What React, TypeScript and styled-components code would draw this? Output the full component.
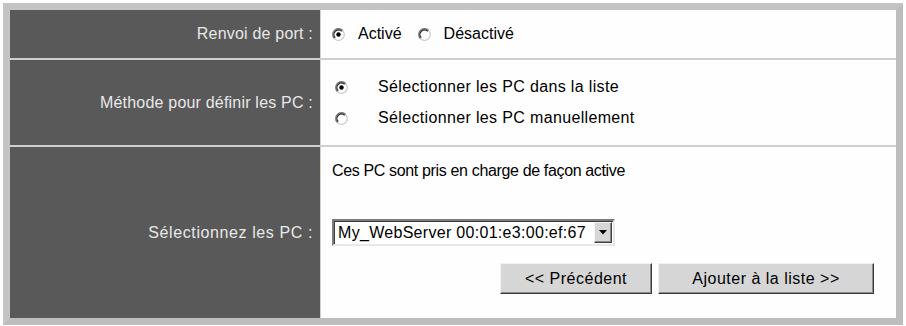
import React from "react";
import styled, { createGlobalStyle } from "styled-components";

const Global = createGlobalStyle`
  html, body { margin: 0; padding: 0; background: #ffffff; }
  body { font-family: "Liberation Sans", Arial, sans-serif; font-size: 16px; color: #000; }
`;

const Frame = styled.div`
  margin: 3px;
  width: 900px;
  box-sizing: border-box;
  border: 7px solid #bdbdbd;
  border-top-color: #c4c4c4;
  border-left-color: #c4c4c4;
  background: #cfcfcf;
  display: grid;
  grid-template-columns: 310px 1fr;
  grid-template-rows: 48px 85px 171px;
  column-gap: 1px;
  row-gap: 2px;
`;

const Label = styled.div<{ $ls?: number }>`
  background: #595959;
  color: #e8e8e8;
  display: flex;
  align-items: center;
  justify-content: flex-end;
  padding-right: 7px;
  font-size: 16px;
  letter-spacing: ${(p) => p.$ls ?? 0.2}px;
`;

const Cell = styled.div`
  background: #fefefe;
  display: flex;
  align-items: center;
  padding-left: 11px;
  gap: 16px;
`;

const Stack = styled.div`
  background: #fefefe;
  display: flex;
  flex-direction: column;
  justify-content: center;
  gap: 7px;
  padding-left: 14px;
`;

const Option = styled.label<{ $gap: number; $ls?: number }>`
  display: flex;
  align-items: center;
  gap: ${(p) => p.$gap}px;
  height: 24px;
  letter-spacing: ${(p) => p.$ls ?? 0}px;
`;

const RadioSvg = styled.svg`
  flex: none;
  display: block;
`;

const Radio = ({ checked }: { checked?: boolean }) => (
  <RadioSvg width="13" height="13" viewBox="0 0 13 13">
    <circle cx="6.5" cy="6.5" r="5.8" fill="#ffffff" stroke="#c8c8c8" strokeWidth="1.2" />
    <path d="M2.4 10.6 A5.8 5.8 0 0 1 10.6 2.4" stroke="#7a7a7a" strokeWidth="1.4" fill="none" />
    <path d="M3.3 9.7 A4.5 4.5 0 0 1 9.7 3.3" stroke="#222222" strokeWidth="1.2" fill="none" />
    {checked && <circle cx="6.5" cy="6.5" r="2.2" fill="#000" />}
  </RadioSvg>
);

const Select3 = styled.div`
  background: #fefefe;
  display: flex;
  flex-direction: column;
  padding: 14px 22px 24px 11px;
`;

const Info = styled.div`
  height: 20px;
  line-height: 20px;
  letter-spacing: -0.35px;
`;

const SelectBox = styled.div`
  margin-top: 38px;
  width: 283px;
  height: 27px;
  box-sizing: border-box;
  border: 2px solid;
  border-color: #7c7c7c #e8e8e8 #e8e8e8 #7c7c7c;
  box-shadow: inset 1px 1px 0 #3c3c3c;
  display: flex;
  align-items: center;
  justify-content: space-between;
  padding-left: 4px;
  background: #fff;
  font-size: 16px;
  letter-spacing: 0.3px;
`;

const Arrow = styled.div`
  width: 18px;
  height: 21px;
  margin-right: 1px;
  box-sizing: border-box;
  background: #d6d6d6;
  border: 1px solid;
  border-color: #f4f4f4 #404040 #404040 #f4f4f4;
  box-shadow: inset -1px -1px 0 #8a8a8a;
  display: flex;
  align-items: center;
  justify-content: center;
`;

const Buttons = styled.div`
  margin-top: 17px;
  display: flex;
  justify-content: flex-end;
  gap: 6px;
`;

const Button = styled.button<{ $w: number }>`
  width: ${(p) => p.$w}px;
  height: 31px;
  box-sizing: border-box;
  background: #d6d6d6;
  border: 1px solid;
  border-color: #f2f2f2 #3a3a3a #3a3a3a #f2f2f2;
  box-shadow: inset -1px -1px 0 #8c8c8c;
  font-family: "Liberation Sans", Arial, sans-serif;
  font-size: 16px;
  color: #000;
  padding: 0;
  letter-spacing: 0.5px;
`;

export default function App() {
  return (
    <>
      <Global />
      <Frame>
        <Label>Renvoi de port :</Label>
        <Cell>
          <Option $gap={13}>
            <Radio checked />
            Activé
          </Option>
          <Option $gap={13}>
            <Radio />
            Désactivé
          </Option>
        </Cell>

        <Label>Méthode pour définir les PC :</Label>
        <Stack>
          <Option $gap={30} $ls={0.35}>
            <Radio checked />
            Sélectionner les PC dans la liste
          </Option>
          <Option $gap={30} $ls={0.35}>
            <Radio />
            Sélectionner les PC manuellement
          </Option>
        </Stack>

        <Label $ls={0.6}>Sélectionnez les PC :</Label>
        <Select3>
          <Info>Ces PC sont pris en charge de façon active</Info>
          <SelectBox>
            <span>My_WebServer 00:01:e3:00:ef:67</span>
            <Arrow>
              <svg width="8" height="5" viewBox="0 0 8 5">
                <path d="M0 0 H8 L4 4.5 Z" fill="#000" />
              </svg>
            </Arrow>
          </SelectBox>
          <Buttons>
            <Button $w={152}>&lt;&lt; Précédent</Button>
            <Button $w={216}>Ajouter à la liste &gt;&gt;</Button>
          </Buttons>
        </Select3>
      </Frame>
    </>
  );
}
